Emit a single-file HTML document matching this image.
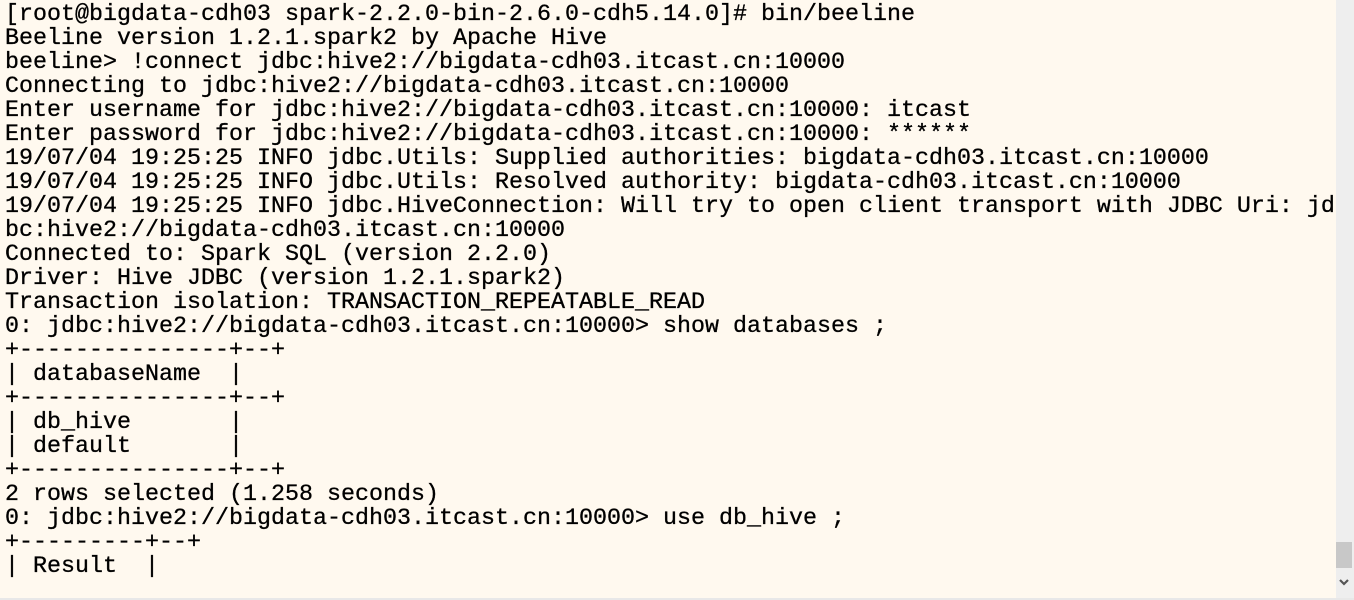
<!DOCTYPE html>
<html><head><style>
html,body{margin:0;padding:0;}
body{width:1354px;height:600px;background:#fff9ef;position:relative;overflow:hidden;}
pre{margin:0;position:absolute;left:5px;top:3px;font-family:"Liberation Mono",monospace;font-size:23.33px;line-height:24px;color:#000;letter-spacing:0;-webkit-text-stroke:0.3px #000;}
.sb{position:absolute;left:1336px;top:0;width:18px;height:600px;background:#eeeeee;}
.th{position:absolute;left:1336px;top:542px;width:16px;height:26px;background:#c8c8c8;}
.ar{position:absolute;left:1339px;top:577px;width:10px;height:10px;}
.bt{position:absolute;left:0;top:598px;width:1354px;height:2px;background:#e8e8e8;}
</style></head><body>
<pre>[root@bigdata-cdh03 spark-2.2.0-bin-2.6.0-cdh5.14.0]# bin/beeline
Beeline version 1.2.1.spark2 by Apache Hive
beeline&gt; !connect jdbc:hive2://bigdata-cdh03.itcast.cn:10000
Connecting to jdbc:hive2://bigdata-cdh03.itcast.cn:10000
Enter username for jdbc:hive2://bigdata-cdh03.itcast.cn:10000: itcast
Enter password for jdbc:hive2://bigdata-cdh03.itcast.cn:10000: ******
19/07/04 19:25:25 INFO jdbc.Utils: Supplied authorities: bigdata-cdh03.itcast.cn:10000
19/07/04 19:25:25 INFO jdbc.Utils: Resolved authority: bigdata-cdh03.itcast.cn:10000
19/07/04 19:25:25 INFO jdbc.HiveConnection: Will try to open client transport with JDBC Uri: jd
bc:hive2://bigdata-cdh03.itcast.cn:10000
Connected to: Spark SQL (version 2.2.0)
Driver: Hive JDBC (version 1.2.1.spark2)
Transaction isolation: TRANSACTION_REPEATABLE_READ
0: jdbc:hive2://bigdata-cdh03.itcast.cn:10000&gt; show databases ;
+---------------+--+
| databaseName  |
+---------------+--+
| db_hive       |
| default       |
+---------------+--+
2 rows selected (1.258 seconds)
0: jdbc:hive2://bigdata-cdh03.itcast.cn:10000&gt; use db_hive ;
+---------+--+
| Result  |
</pre>
<div class="sb"></div><div class="th"></div>
<svg class="ar" viewBox="0 0 10 10"><path d="M1 3 L5 7 L9 3" stroke="#555" stroke-width="2.2" fill="none"/></svg>
<div class="bt"></div>
</body></html>
